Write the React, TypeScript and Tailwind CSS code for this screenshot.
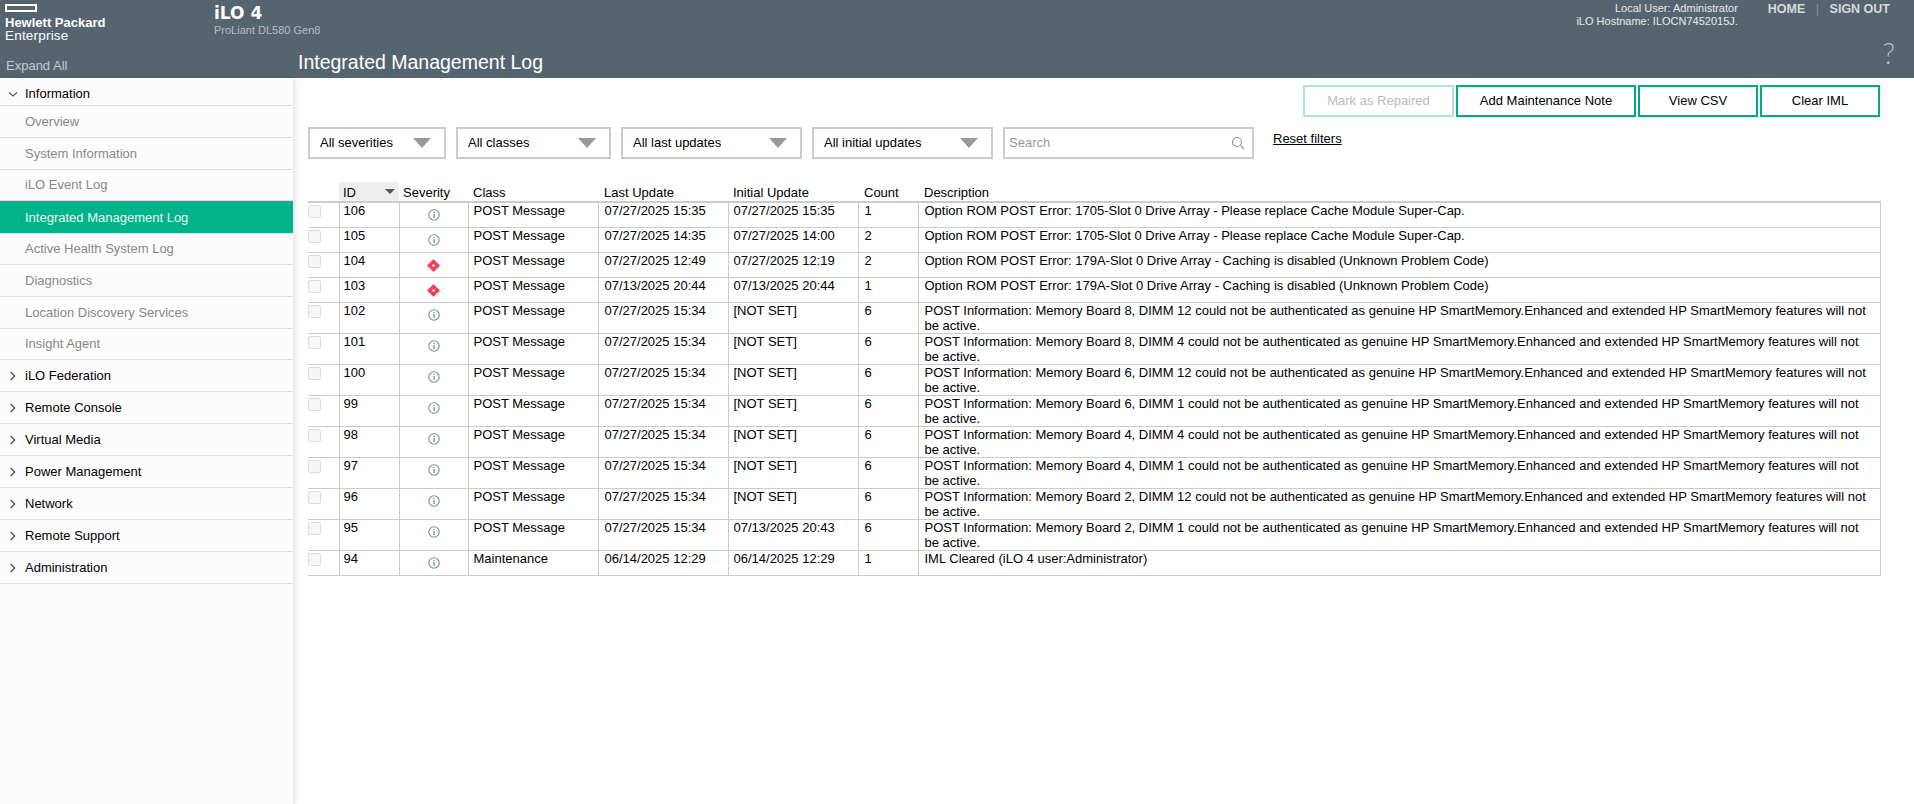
const infoItems = [
  "Overview",
  "System Information",
  "iLO Event Log",
  "Integrated Management Log",
  "Active Health System Log",
  "Diagnostics",
  "Location Discovery Services",
  "Insight Agent",
];

const groups = [
  "iLO Federation",
  "Remote Console",
  "Virtual Media",
  "Power Management",
  "Network",
  "Remote Support",
  "Administration",
];

const filters = [
  { label: "All severities", width: "w-[138px]" },
  { label: "All classes", width: "w-[155px]" },
  { label: "All last updates", width: "w-[181px]" },
  { label: "All initial updates", width: "w-[181px]" },
];

const smartMemory = (board: number, dimm: number) =>
  `POST Information: Memory Board ${board}, DIMM ${dimm} could not be authenticated as genuine HP SmartMemory.Enhanced and extended HP SmartMemory features will not be active.`;

const superCap =
  "Option ROM POST Error: 1705-Slot 0 Drive Array - Please replace Cache Module Super-Cap.";
const caching =
  "Option ROM POST Error: 179A-Slot 0 Drive Array - Caching is disabled (Unknown Problem Code)";

const rows = [
  { id: 106, sev: "info", cls: "POST Message", last: "07/27/2025 15:35", first: "07/27/2025 15:35", count: 1, desc: superCap },
  { id: 105, sev: "info", cls: "POST Message", last: "07/27/2025 14:35", first: "07/27/2025 14:00", count: 2, desc: superCap },
  { id: 104, sev: "crit", cls: "POST Message", last: "07/27/2025 12:49", first: "07/27/2025 12:19", count: 2, desc: caching },
  { id: 103, sev: "crit", cls: "POST Message", last: "07/13/2025 20:44", first: "07/13/2025 20:44", count: 1, desc: caching },
  { id: 102, sev: "info", cls: "POST Message", last: "07/27/2025 15:34", first: "[NOT SET]", count: 6, desc: smartMemory(8, 12) },
  { id: 101, sev: "info", cls: "POST Message", last: "07/27/2025 15:34", first: "[NOT SET]", count: 6, desc: smartMemory(8, 4) },
  { id: 100, sev: "info", cls: "POST Message", last: "07/27/2025 15:34", first: "[NOT SET]", count: 6, desc: smartMemory(6, 12) },
  { id: 99, sev: "info", cls: "POST Message", last: "07/27/2025 15:34", first: "[NOT SET]", count: 6, desc: smartMemory(6, 1) },
  { id: 98, sev: "info", cls: "POST Message", last: "07/27/2025 15:34", first: "[NOT SET]", count: 6, desc: smartMemory(4, 4) },
  { id: 97, sev: "info", cls: "POST Message", last: "07/27/2025 15:34", first: "[NOT SET]", count: 6, desc: smartMemory(4, 1) },
  { id: 96, sev: "info", cls: "POST Message", last: "07/27/2025 15:34", first: "[NOT SET]", count: 6, desc: smartMemory(2, 12) },
  { id: 95, sev: "info", cls: "POST Message", last: "07/27/2025 15:34", first: "07/13/2025 20:43", count: 6, desc: smartMemory(2, 1) },
  { id: 94, sev: "info", cls: "Maintenance", last: "06/14/2025 12:29", first: "06/14/2025 12:29", count: 1, desc: "IML Cleared (iLO 4 user:Administrator)" },
];

function InfoIcon() {
  return (
    <svg width="12" height="12" viewBox="0 0 12 12" fill="none" className="block">
      <circle cx="6" cy="6" r="5.2" stroke="#7b8c9c" strokeWidth="1.1" />
      <rect x="5.4" y="5" width="1.3" height="4" fill="#7b8c9c" />
      <rect x="5.4" y="2.8" width="1.3" height="1.3" fill="#7b8c9c" />
    </svg>
  );
}

function CriticalIcon() {
  return (
    <svg width="13" height="13" viewBox="0 0 13 13" className="block">
      <path d="M6.5.9 12.1 6.5 6.5 12.1.9 6.5Z" fill="#ef3f55" stroke="#ef3f55" strokeWidth="1.2" strokeLinejoin="round" />
      <path d="M6.5 4.9 8.1 6.5 6.5 8.1 4.9 6.5Z" fill="#fff" />
      <path d="M3.7 3.7 4.7 4.7M9.3 3.7 8.3 4.7M3.7 9.3 4.7 8.3M9.3 9.3 8.3 8.3" stroke="#fff" strokeWidth="0.7" opacity="0.45" />
    </svg>
  );
}

function Caret({ open }: { open?: boolean }) {
  return (
    <svg width="10" height="10" viewBox="0 0 10 10" fill="none" className="block">
      {open ? (
        <path d="M1 3.5 5 7l4-3.5" stroke="#555" strokeWidth="1.2" />
      ) : (
        <path d="M2.8 1 6.6 5 2.8 9" stroke="#555" strokeWidth="1.4" />
      )}
    </svg>
  );
}

function FilterSelect({ label, width }: { label: string; width: string }) {
  return (
    <div className={`flex h-[32px] items-center justify-between border-2 border-[#ccc] pl-[10px] pr-[13px] ${width}`}>
      <span className="pb-px">{label}</span>
      <div className="h-0 w-0 border-x-[9px] border-t-[10px] border-x-transparent border-t-[#999]" />
    </div>
  );
}

export default function App() {
  return (
    <div className="flex min-h-screen flex-col bg-white font-['Liberation_Sans',Arial,sans-serif] text-[13px] leading-[15px] text-black">
      <header className="flex h-[78px] bg-[#56646f]">
        <div className="flex w-[293px] shrink-0 flex-col justify-between">
          <div className="flex pt-[4px]">
            <div className="w-[214px] shrink-0 pl-[5px] text-white">
              <div className="h-[8px] w-[32px] border-2 border-white" />
              <div className="mt-[4px] text-[13px] font-bold leading-[14px]">Hewlett Packard</div>
              <div className="text-[13.5px] leading-[12px] tracking-[0.2px]">Enterprise</div>
            </div>
            <div className="whitespace-nowrap">
              <div className="font-['DejaVu_Sans',sans-serif] text-[17px] font-bold leading-[18px] text-white">iLO 4</div>
              <div className="mt-[1px] text-[11px] leading-[14px] text-[#b4bcc3]">ProLiant DL580 Gen8</div>
            </div>
          </div>
          <div className="pb-[5px] pl-[6px] text-[13px] text-[#c3c9ce]">Expand All</div>
        </div>
        <div className="flex flex-1 flex-col justify-between pl-[5px]">
          <div className="flex justify-end pr-[24px] pt-[2px] text-white">
            <div className="text-right text-[11px] leading-[13px] text-[#e6e9eb]">
              <div>Local User: Administrator</div>
              <div>iLO Hostname: ILOCN7452015J.</div>
            </div>
            <div className="ml-[30px] flex pt-px text-[12.5px] font-bold leading-[13px] text-[#d5dadd]">
              <span>HOME</span>
              <span className="mx-[10.5px] font-normal text-[#87939c]">|</span>
              <span>SIGN OUT</span>
            </div>
          </div>
          <div className="flex items-end justify-between pb-[4px]">
            <h1 className="text-[19.5px] leading-[24px] text-white">Integrated Management Log</h1>
            <span className="mb-[9px] mr-[19px] font-['Lato',sans-serif] text-[29px] font-light leading-[24px] text-[#b4bcc3]">?</span>
          </div>
        </div>
      </header>

      <div className="flex flex-1">
        <aside className="w-[293px] shrink-0 bg-[#fcfcfc] shadow-[2px_0_6px_rgba(0,0,0,0.12)]">
          <div className="flex h-[28px] items-center border-b border-[#ddd] pt-[4px]">
            <span className="flex w-[25px] justify-center">
              <Caret open />
            </span>
            <span>Information</span>
          </div>
          {infoItems.map((item) =>
            item === "Integrated Management Log" ? (
              <div key={item} className="flex h-[31.8px] items-center bg-[#01b38a] pl-[25px] text-[#e6f7f2]">
                {item}
              </div>
            ) : (
              <div key={item} className="flex h-[31.8px] items-center border-b border-[#ddd] pl-[25px] text-[#888]">
                {item}
              </div>
            ),
          )}
          {groups.map((item) => (
            <div key={item} className="flex h-[32px] items-center border-b border-[#ddd]">
              <span className="flex w-[25px] justify-center">
                <Caret />
              </span>
              <span>{item}</span>
            </div>
          ))}
        </aside>

        <main className="min-w-0 flex-1 pl-[15px] pr-[33px]">
          <div className="flex justify-end gap-[2px] pr-px pt-[7px]">
            <button className="h-[32px] w-[151px] border-2 border-[#b0e6d9] pb-px text-[#bbb]">Mark as Repaired</button>
            <button className="h-[32px] w-[180px] border-2 border-[#01a982] pb-px">Add Maintenance Note</button>
            <button className="h-[32px] w-[120px] border-2 border-[#01a982] pb-px">View CSV</button>
            <button className="h-[32px] w-[120px] border-2 border-[#01a982] pb-px">Clear IML</button>
          </div>

          <div className="mt-[10px] flex items-start gap-[10px]">
            {filters.map((f) => (
              <FilterSelect key={f.label} label={f.label} width={f.width} />
            ))}
            <div className="flex h-[32px] w-[251px] items-center justify-between border-2 border-[#ccc] pl-[4px] pr-[7px] text-[#999]">
              <span className="pb-px">Search</span>
              <svg width="14" height="14" viewBox="0 0 14 14" fill="none" className="block">
                <circle cx="6" cy="6" r="4.5" stroke="#999" strokeWidth="1.2" />
                <path d="m9.5 9.5 3.5 3.5" stroke="#999" strokeWidth="1.2" />
              </svg>
            </div>
            <a className="ml-[9px] mt-[4px] underline">Reset filters</a>
          </div>

          <table className="mt-[23px] w-[1573px] table-fixed border-collapse">
            <colgroup>
              <col className="w-[31px]" />
              <col className="w-[60px]" />
              <col className="w-[69px]" />
              <col className="w-[130px]" />
              <col className="w-[130px]" />
              <col className="w-[130px]" />
              <col className="w-[60px]" />
              <col />
            </colgroup>
            <thead>
              <tr className="h-[20px] border-b-2 border-[#ccc] text-left">
                <th />
                <th className="bg-[#eee] px-[4px] pt-[2px] font-normal">
                  <div className="flex items-center justify-between">
                    <span>ID</span>
                    <div className="-mt-[3px] h-0 w-0 border-x-[5px] border-t-[5px] border-x-transparent border-t-[#555]" />
                  </div>
                </th>
                <th className="px-[4px] pt-[2px] font-normal">Severity</th>
                <th className="pl-[5px] pt-[2px] font-normal">Class</th>
                <th className="pl-[6px] pt-[2px] font-normal">Last Update</th>
                <th className="pl-[5px] pt-[2px] font-normal">Initial Update</th>
                <th className="pl-[6px] pt-[2px] font-normal">Count</th>
                <th className="pl-[6px] pt-[2px] font-normal">Description</th>
              </tr>
            </thead>
            <tbody>
              {rows.map((r) => (
                <tr key={r.id} className="h-[25px] border-b border-[#ccc] align-top">
                  <td className="pt-[2px]">
                    <div className="h-[13px] w-[13px] rounded-[2px] border border-[#ddd] bg-[#f6f6f6]" />
                  </td>
                  <td className="border-x border-[#ccc] px-[4px]">{r.id}</td>
                  <td className="border-x border-[#ccc] pt-[6px]">
                    <div className="flex justify-center">{r.sev === "crit" ? <CriticalIcon /> : <InfoIcon />}</div>
                  </td>
                  <td className="border-x border-[#ccc] pl-[5px]">{r.cls}</td>
                  <td className="border-x border-[#ccc] pl-[6px]">{r.last}</td>
                  <td className="border-x border-[#ccc] pl-[5px]">{r.first}</td>
                  <td className="border-x border-[#ccc] pl-[6px]">{r.count}</td>
                  <td className="border-x border-[#ccc] pl-[6px] pr-[8px]">{r.desc}</td>
                </tr>
              ))}
            </tbody>
          </table>
        </main>
      </div>
    </div>
  );
}
